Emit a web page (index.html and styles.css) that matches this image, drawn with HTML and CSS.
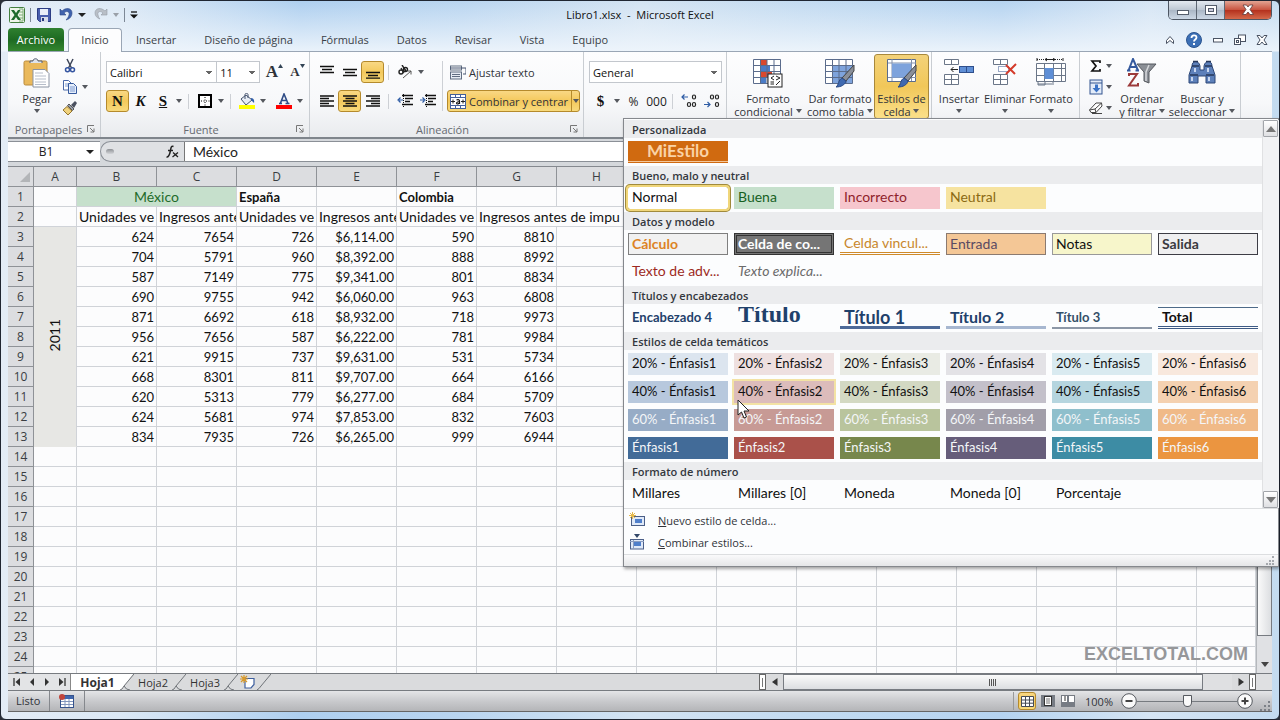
FILE: index.html
```html
<!DOCTYPE html>
<html lang="es">
<head>
<meta charset="utf-8">
<title>Libro1.xlsx - Microsoft Excel</title>
<link rel="stylesheet" href="styles.css">
</head>
<body>
<div class="window">
  <header class="titlebar">
    <div class="quick">
      <svg width="16" height="16" viewBox="0 0 16 16"><rect x=".5" y=".5" width="15" height="15" rx="1" fill="#eef5ea" stroke="#44803f"/><path d="M10 2h4v12h-4M10 5h4M10 8h4M10 11h4" fill="none" stroke="#7fae79"/><path d="M2 3h3l2 3 2-3h2.500L8.500 8l3.500 5H9L7 10l-2 3H2l3.500-5z" fill="#1f6b2c"/></svg>
      <span class="quick-sep"></span>
      <button class="icon-btn" aria-label="Guardar"><svg width="14" height="14" viewBox="0 0 14 14"><path d="M.5 .5h13v13h-11l-2-2z" fill="#4a5fae" stroke="#2c3c83"/><rect x="3" y="1" width="8" height="6" fill="#e9eef8"/><rect x="4" y="9" width="7" height="5" fill="#d7dcea"/><rect x="5" y="10" width="2" height="3" fill="#27367a"/></svg></button>
      <button class="icon-btn undo" aria-label="Deshacer"><svg width="14" height="14" viewBox="0 0 14 14"><path d="M1 1v6h6L5 5c3-3 6-1 5 2-.5 2-2 4-3 5 4-1 6-4 6-7C13 0 7-1 3 3z" fill="#3f62ad" stroke="#2b4687" stroke-width=".6"/></svg></button>
      <span class="caret dark"></span>
      <button class="icon-btn redo" aria-label="Rehacer"><svg width="14" height="14" viewBox="0 0 14 14"><path d="M13 1v6H7l2-2C6 2 3 4 4 7c.5 2 1 3 2 4C3 10 1 8 1 5c0-5 6-6 10-2z" fill="#b9bfc7" stroke="#959ca6" stroke-width=".6"/></svg></button>
      <span class="caret pale"></span>
      <span class="quick-sep"></span>
      <svg width="8" height="8" viewBox="0 0 8 8"><path d="M1 1h6" stroke="#111" stroke-width="1.300"/><path d="M0 3.500h8L4 7.500z" fill="#111"/></svg>
    </div>
    <div class="title">Libro1.xlsx&nbsp; -&nbsp; Microsoft Excel</div>
    <div class="win-controls">
      <button class="wc" aria-label="Minimizar"><svg width="14" height="12"><rect x="1.500" y="6.500" width="11" height="4" fill="#fff" stroke="#555d6b"/></svg></button>
      <button class="wc" aria-label="Restaurar"><svg width="14" height="12"><rect x="1.500" y="1.500" width="11" height="9" fill="#fff" stroke="#555d6b"/><rect x="4.500" y="4.500" width="5" height="3" fill="#ccd" stroke="#555d6b"/></svg></button>
      <button class="wc close" aria-label="Cerrar"><svg width="14" height="12" viewBox="0 0 14 12"><path d="M2 1h3.500L7 3l1.500-2H12L9 5.500l3.500 5H9L7 8l-2 2.500H1.500l3.500-5z" fill="#fff" stroke="#5d3a3a" stroke-width=".8"/></svg></button>
    </div>
  </header>

  <nav class="tabs">
    <button class="tab file">Archivo</button>
    <button class="tab active">Inicio</button>
    <button class="tab">Insertar</button>
    <button class="tab">Diseño de página</button>
    <button class="tab">Fórmulas</button>
    <button class="tab">Datos</button>
    <button class="tab">Revisar</button>
    <button class="tab">Vista</button>
    <button class="tab">Equipo</button>
    <div class="tab-tools">
      <svg width="12" height="12"><path d="M2.500 6.500l3.500-4 3.500 4v3l-3.500-3-3.500 3z" fill="#fff" stroke="#4a5363"/></svg>
      <svg width="16" height="16"><circle cx="8" cy="8" r="7.500" fill="#3b6fb5" stroke="#2c5590"/><path d="M5.500 6c0-3.500 5-3.500 5-.5 0 2-2.500 2-2.500 4" fill="none" stroke="#fff" stroke-width="1.800"/><rect x="7" y="11" width="2" height="2" fill="#fff"/></svg>
      <svg width="12" height="12"><rect x="1.500" y="4.500" width="9" height="3.500" fill="#fff" stroke="#4a5363"/></svg>
      <svg width="12" height="12"><rect x="4.500" y="1" width="7" height="6.500" fill="#fff" stroke="#4a5363"/><rect x=".5" y="4.500" width="6" height="6" fill="#fff" stroke="#4a5363"/><rect x="2.500" y="6.500" width="2" height="2" fill="none" stroke="#4a5363"/></svg>
      <svg width="12" height="12"><path d="M1 1.500h3l2 2.500 2-2.500h3L8 6l3 4.500H8L6 8l-2 2.500H1L4 6z" fill="#fff" stroke="#4a5363"/></svg>
    </div>
  </nav>

  <section class="ribbon">
    <div class="group clipboard">
      <div class="group-body">
        <button class="big">
          <svg width="28" height="30" viewBox="0 0 28 30"><rect x="1" y="3" width="23" height="24" rx="1.500" fill="#eab95c" stroke="#b98a3c"/><path d="M7 5V3h3c0-3 5-3 5 0h4v2" fill="#dfe4ec" stroke="#525d70"/><path d="M10 11.500h12l4 4V29H10z" fill="#fff" stroke="#8a93a3"/><path d="M12 15h8M12 18h11M12 21h11M12 24h11M12 26.500h11" stroke="#b6bdc9"/></svg>
          <span class="cap">Pegar<br><span class="caret"></span></span>
        </button>
        <div class="stack">
          <button class="small" aria-label="Cortar"><svg width="16" height="16" viewBox="0 0 16 16"><path d="M5 1l4.500 9M11 1L6.500 10" stroke="#3f475a" stroke-width="1.500"/><circle cx="5.500" cy="11.800" r="2" fill="none" stroke="#3454a0" stroke-width="1.500"/><circle cx="10.500" cy="11.800" r="2" fill="none" stroke="#3454a0" stroke-width="1.500"/></svg></button>
          <button class="small" aria-label="Copiar"><svg width="16" height="16" viewBox="0 0 16 16"><path d="M1.500 1.500h5l2.500 2.500v7h-7.500z" fill="#fff" stroke="#4a69a8"/><path d="M3 5h4M3 7h4" stroke="#7f9bd0"/><path d="M6.500 4.500h5l3 3v7h-8z" fill="#e6eefb" stroke="#35599d"/><path d="M8 8h5M8 10h5M8 12h5" stroke="#7f9bd0"/></svg><span class="caret"></span></button>
          <button class="small" aria-label="Copiar formato"><svg width="16" height="16" viewBox="0 0 16 16"><path d="M9 5l4-4 2 2-3 5z" fill="#4b5160"/><path d="M7 4l5 5-1.500 1.500-5-5z" fill="#9aa0ac" stroke="#555"/><path d="M5 6.500L10 11l-4 4-5-5z" fill="#f0d27d" stroke="#94742c"/></svg></button>
        </div>
      </div>
      <div class="group-label"><span>Portapapeles</span><svg class="launch" width="8" height="8"><path d="M.5 7V.5H7M3 3l4 4M7 3.500V7H3.500" fill="none" stroke="#777"/></svg></div>
    </div>

    <div class="group font">
      <div class="group-body rows">
        <div class="row">
          <select class="combo face" aria-label="Fuente"><option>Calibri</option></select>
          <select class="combo size" aria-label="Tamaño de fuente"><option>11</option></select>
          <button class="ib grow" aria-label="Aumentar tamaño"><span class="serif-lg">A</span><svg width="5" height="4"><path d="M0 4l2.500-4L5 4z" fill="#345"/></svg></button>
          <button class="ib shrink" aria-label="Disminuir tamaño"><span class="serif-sm">A</span><svg width="5" height="4"><path d="M0 0h5L2.500 4z" fill="#345"/></svg></button>
        </div>
        <div class="row">
          <button class="ib on serif">N</button><button class="ib serif italic">K</button><button class="ib serif under">S</button><span class="caret"></span><span class="sep"></span>
          <button class="ib" aria-label="Bordes"><svg width="14" height="14"><rect x="1" y="1" width="12" height="12" fill="#fff" stroke="#000" stroke-width="2"/><path d="M7 3v9M3 7h9" stroke="#000" stroke-dasharray="1 1.500"/></svg></button><span class="caret"></span><span class="sep"></span>
          <button class="ib" aria-label="Relleno"><svg width="16" height="16" viewBox="0 0 16 16"><path d="M2 6l5-4 6 5-6 5z" fill="#e8edf5" stroke="#44536e"/><path d="M6 6V1.500c0-1.500 3-1.500 3 0V5" fill="none" stroke="#44536e"/><path d="M12 5c3 0 3.500 3 3 5l-3-3z" fill="#2f5da8"/><rect y="12" width="16" height="4" fill="#ff0"/></svg></button><span class="caret wide-gap"></span>
          <button class="ib" aria-label="Color de fuente"><svg width="16" height="16" viewBox="0 0 16 16"><path d="M3 10.500h3M9.500 10.500h4M4.500 10L8 1l4 9.500M6 7.500h4.500" fill="none" stroke="#2f4c86" stroke-width="1.600"/><rect y="12" width="16" height="4" fill="#f00"/></svg></button><span class="caret"></span>
        </div>
      </div>
      <div class="group-label"><span>Fuente</span><svg class="launch" width="8" height="8"><path d="M.5 7V.5H7M3 3l4 4M7 3.500V7H3.500" fill="none" stroke="#777"/></svg></div>
    </div>

    <div class="group align">
      <div class="group-body">
        <div class="rows aligners">
          <div class="row">
            <button class="ib" aria-label="Arriba"><svg width="14" height="14"><path d="M0 1.500h14M2 4.500h10M0 7.500h14" stroke="#111" stroke-width="1.300"/></svg></button><button class="ib" aria-label="Medio"><svg width="14" height="14"><path d="M0 4.500h14M2 7.500h10M0 10.500h14" stroke="#111" stroke-width="1.300"/></svg></button><button class="ib on" aria-label="Abajo"><svg width="14" height="14"><path d="M0 7.500h14M2 10.500h10M0 13.200h14" stroke="#111" stroke-width="1.300"/></svg></button><span class="sep"></span>
            <button class="ib" aria-label="Orientación"><svg width="16" height="14" viewBox="0 0 16 14"><g fill="none" stroke="#222" stroke-width="1.400"><circle cx="4" cy="7" r="2"/><path d="M4 3l3 5"/><circle cx="8.500" cy="4.500" r="2"/><path d="M5 0l4 6"/></g><path d="M6 13l8-7M14 9.500V6h-3.500" fill="none" stroke="#555"/></svg></button><span class="caret"></span>
          </div>
          <div class="row">
            <button class="ib" aria-label="Izquierda"><svg width="14" height="12"><path d="M0 1h14M0 3.500h9M0 6h14M0 8.500h9M0 11h14" stroke="#111" stroke-width="1.300"/></svg></button><button class="ib on" aria-label="Centrar"><svg width="14" height="12"><path d="M0 1h14M2.500 3.500h9M0 6h14M2.500 8.500h9M0 11h14" stroke="#111" stroke-width="1.300"/></svg></button><button class="ib" aria-label="Derecha"><svg width="14" height="12"><path d="M0 1h14M5 3.500h9M0 6h14M5 8.500h9M0 11h14" stroke="#111" stroke-width="1.300"/></svg></button><span class="sep"></span>
            <button class="ib" aria-label="Disminuir sangría"><svg width="16" height="14"><path d="M5 1.500h11M8 4.500h8M8 7.500h5M5 10.500h11" stroke="#111" stroke-width="1.600"/><path d="M6.500 0v14" stroke="#111" stroke-dasharray="1 1"/><path d="M6 6H2M3.500 3.500L1 6l2.500 2.500" fill="none" stroke="#2e5ca5" stroke-width="1.200"/></svg></button><button class="ib" aria-label="Aumentar sangría"><svg width="16" height="14"><path d="M5 1.500h11M8 4.500h8M8 7.500h5M5 10.500h11" stroke="#111" stroke-width="1.600"/><path d="M6.500 0v14" stroke="#111" stroke-dasharray="1 1"/><path d="M0 6h4M2.500 3.500L5 6 2.500 8.500" fill="none" stroke="#2e5ca5" stroke-width="1.200"/></svg></button>
          </div>
        </div>
        <span class="sep tall"></span>
        <div class="rows merge-col">
          <div class="row"><button class="wide"><svg width="16" height="15"><rect x=".5" y="1" width="11" height="4" fill="#fff" stroke="#5f6c80"/><path d="M0 3h16v6h-3" fill="none" stroke="#44536e"/><rect x=".5" y="7" width="11" height="7" fill="#e6ebf3" stroke="#5f6c80"/><path d="M2 9.500h8M2 11.500h8" stroke="#5f6c80"/></svg>Ajustar texto</button></div>
          <div class="row"><button class="wide on"><svg width="16" height="15"><rect x=".5" y=".5" width="15" height="14" fill="#fff" stroke="#44609a"/><path d="M0 3.500h16M0 11.500h16M5.500 0v3M10.500 0v3M5.500 12v3M10.500 12v3" stroke="#44609a"/><path d="M1 7.500h4M3 5.500v4M11 7.500h4M13 5.500v4" stroke="#222"/><path d="M6.500 6c2-1 3 0 3 1v3M9.500 7.500c-3 0-4 2.500-1.500 2.500l1.500-1" fill="none" stroke="#111" stroke-width="1.200"/></svg><span>Combinar y centrar</span><i class="split"><span class="caret"></span></i></button></div>
        </div>
      </div>
      <div class="group-label"><span>Alineación</span><svg class="launch" width="8" height="8"><path d="M.5 7V.5H7M3 3l4 4M7 3.500V7H3.500" fill="none" stroke="#777"/></svg></div>
    </div>

    <div class="group number">
      <div class="group-body rows">
        <div class="row"><select class="combo format" aria-label="Formato de número"><option>General</option></select></div>
        <div class="row">
          <button class="ib serif">$</button><span class="caret"></span><button class="ib txt">%</button><button class="ib txt">000</button><span class="sep"></span>
          <button class="ib" aria-label="Aumentar decimales"><svg width="16" height="14"><g fill="none" stroke="#222" stroke-width="1.200"><rect x="11.500" y="1" width="3" height="4" rx="1.500"/><rect x="6.500" y="8.500" width="3" height="4" rx="1.500"/><rect x="11.500" y="8.500" width="3" height="4" rx="1.500"/></g><path d="M1 3h6M3.500 .5L1 3l2.500 2.500" fill="none" stroke="#2e5ca5" stroke-width="1.200"/></svg></button>
          <button class="ib" aria-label="Disminuir decimales"><svg width="16" height="14"><g fill="none" stroke="#222" stroke-width="1.200"><rect x="6.500" y="1" width="3" height="4" rx="1.500"/><rect x="11.500" y="1" width="3" height="4" rx="1.500"/><rect x="11.500" y="8.500" width="3" height="4" rx="1.500"/></g><path d="M0 10.500h6M3.500 8L6 10.500 3.500 13" fill="none" stroke="#2e5ca5" stroke-width="1.200"/></svg></button>
        </div>
      </div>
      <div class="group-label"></div>
    </div>

    <div class="group styles">
      <div class="group-body">
        <button class="big w76">
          <svg width="30" height="30" viewBox="0 0 30 30"><rect x=".5" y="1.500" width="27" height="24" fill="#fff"/><rect x="7" y="1" width="7" height="6" fill="#d9492e"/><rect x="7" y="7" width="10" height="6" fill="#4a7cc7"/><rect x="7" y="13" width="12" height="6" fill="#d9492e"/><rect x="7" y="19" width="6" height="6" fill="#4a7cc7"/><path d="M.5 1.500h27v24H.5zM.5 7.500h27M.5 13.500h27M.5 19.500h27M7.500 1v24M14 1v24M21 1v24" fill="none" stroke="#5b6c8c"/><rect x="15" y="16" width="14" height="13" fill="#fff" stroke="#222"/><path d="M21 18l-3 2 3 2M17.500 24h3.500M17.500 26h3.500M23 18l4 2-4 2M23 27l4-4" fill="none" stroke="#222"/></svg>
          <span class="cap">Formato<br>condicional <span class="caret"></span></span>
        </button>
        <button class="big w66">
          <svg width="30" height="30" viewBox="0 0 30 30"><rect x=".5" y="1.500" width="27" height="24" fill="#fff"/><rect x="7" y="7" width="21" height="18" fill="#7ea3dc"/><path d="M.5 1.500h27v24H.5zM.5 7.500h27M.5 13.500h27M.5 19.500h27M7.500 1v24M14 1v24M21 1v24" fill="none" stroke="#5b6c8c"/><path d="M29 7v6l-8 10-4-3z" fill="#8a8f99" stroke="#444"/><path d="M17 20l4 3c-1 4-5 6-10 6 3-2 2-7 6-9z" fill="#3f69b0" stroke="#2b4a85"/></svg>
          <span class="cap">Dar formato<br>como tabla <span class="caret"></span></span>
        </button>
        <button class="big on w54">
          <svg width="30" height="30" viewBox="0 0 30 30"><path d="M.5 1.500h28v22H.5z" fill="#fff" stroke="#5b6c8c"/><path d="M5 1v22M24.500 1v22M1 5h28M1 19.500h28" stroke="#8391ab"/><rect x="5" y="5.500" width="19" height="14" fill="#7ea3dc"/><path d="M29 7v6l-8 10-4-3z" fill="#8a8f99" stroke="#444"/><path d="M17 20l4 3c-1 4-5 6-10 6 3-2 2-7 6-9z" fill="#3f69b0" stroke="#2b4a85"/></svg>
          <span class="cap">Estilos de<br>celda <span class="caret"></span></span>
        </button>
      </div>
      <div class="group-label"></div>
    </div>

    <div class="group cells">
      <div class="group-body">
        <button class="big w46">
          <svg width="30" height="30" viewBox="0 0 30 30"><path d="M.5 1.500h14v5H.5zM7.500 1v5M.5 16.500h14v10H.5zM7.500 16v10M.5 21.500h14" fill="#fff" stroke="#6b7688"/><rect x="15.500" y="8.500" width="14" height="6" fill="#5f8fd6" stroke="#2f4f8c"/><path d="M22.500 8v6" stroke="#2f4f8c"/><path d="M14 11.500H7M9.500 9L7 11.500 9.500 14" fill="none" stroke="#222"/></svg>
          <span class="cap">Insertar<br><span class="caret"></span></span>
        </button>
        <button class="big w46">
          <svg width="30" height="30" viewBox="0 0 30 30"><path d="M3.500 1.500h14v5h-14zM10.500 1v5M3.500 16.500h14v10h-14zM10.500 16v10M3.500 21.500h14" fill="#fff" stroke="#6b7688"/><rect x="8.500" y="8.500" width="10" height="5" fill="#fff" stroke="#36558f" stroke-dasharray="1 1"/><path d="M16 7l9 9M26 6L16 16" stroke="#d43b2b" stroke-width="2"/></svg>
          <span class="cap">Eliminar<br><span class="caret"></span></span>
        </button>
        <button class="big w46">
          <svg width="30" height="30" viewBox="0 0 30 30"><path d="M.5 5.500h29v18H.5zM.5 10.500h29M.5 17.500h29M8.500 5v18M17.500 5v18M25.500 5v18" fill="#fff" stroke="#6b7688"/><rect x="8.500" y="10" width="9" height="11" fill="#5f8fd6"/><path d="M2 26h14M2 24v3h7v-3M17 24v3" fill="none" stroke="#6b7688"/><path d="M1 1.500h26" stroke="#222" stroke-dasharray="1 1"/><path d="M1 0v3M27 0v3M9 1.500h10M11 0L9 1.500 11 3M17 0l2 1.500L17 3" stroke="#222" fill="none"/></svg>
          <span class="cap">Formato<br><span class="caret"></span></span>
        </button>
      </div>
      <div class="group-label"></div>
    </div>

    <div class="group edit">
      <div class="group-body">
        <div class="stack">
          <button class="small" aria-label="Autosuma"><svg width="16" height="14"><path d="M12 4V2H4l4 5-4 5h8v-2" fill="none" stroke="#111" stroke-width="1.700"/></svg><span class="caret"></span></button>
          <button class="small" aria-label="Rellenar"><svg width="16" height="16"><rect x="2" y="1" width="12" height="14" fill="#e3ecf9" stroke="#33558f"/><path d="M2 4h12" stroke="#33558f"/><path d="M7 5.500h3V9h2.500l-4 4.500-4-4.500H7z" fill="#3b73c6"/></svg><span class="caret"></span></button>
          <button class="small" aria-label="Borrar"><svg width="16" height="14"><path d="M1.500 9L8 2l5.500 0L14 5l-6 6.500H3z" fill="#fff" stroke="#444"/><path d="M8 11.500L7 8l6.500-6M1.500 9L7 8M4 12.500h10" fill="none" stroke="#444"/></svg><span class="caret"></span></button>
        </div>
        <button class="big w60">
          <svg width="30" height="30" viewBox="0 0 30 30"><path d="M10 6h19l-7 8v11l-5-2v-9z" fill="#8b8f96" stroke="#55585e"/><path d="M22 7l-3 7v9" stroke="#d6d8db" fill="none" stroke-width="1.500"/><path d="M1.500 12.500L6 1l5 11.500M3 9h6M0 12.500h3.500M8.500 12.500H12" fill="none" stroke="#35599d" stroke-width="2"/><path d="M2 18v-2h8L2 27.500h9V25" fill="none" stroke="#9c3a3a" stroke-width="2"/></svg>
          <span class="cap">Ordenar<br>y filtrar <span class="caret"></span></span>
        </button>
        <button class="big w66">
          <svg width="28" height="30" viewBox="0 0 28 30"><path d="M4 8c0-6 7-6 8 0v4h4V8c1-6 8-6 8 0l3 9v8h-9v-7h-8v7H1v-8z" fill="#5d80ba" stroke="#2d4777"/><path d="M5 3.500h5M18 3.500h5M4 8h7M17 8h7M2 17h8M18 17h8" stroke="#26375a" stroke-width="1.500"/><path d="M4 19v4M21 19v4M7 10v4M20 10v4" stroke="#c8d7f0" stroke-width="2"/></svg>
          <span class="cap">Buscar y<br>seleccionar <span class="caret"></span></span>
        </button>
      </div>
      <div class="group-label"></div>
    </div>
  </section>

  <section class="formula">
    <label class="namebox"><input type="text" value="B1" aria-label="Cuadro de nombres"><span class="caret dark"></span></label>
    <div class="fx"><span class="knob"></span><svg width="14" height="14" viewBox="0 0 14 14"><path d="M8.500 1.500C6 .5 6 3 5.500 5.500S4 12.500 1.500 12M3 5.500h5" fill="none" stroke="#222" stroke-width="1.500"/><path d="M8 7.500l5 4.500M13 7.500l-5.500 4.500" stroke="#222" stroke-width="1.300"/></svg></div>
    <input class="content" type="text" value="México" aria-label="Barra de fórmulas">
  </section>

  <main class="sheet">
    <div class="grid-clip">
      <table class="grid">
        <colgroup><col class="c-row"><col class="c-a"><col span="14" class="c-n"><col></colgroup>
        <thead><tr><th class="corner"><svg width="12" height="12"><path d="M11 1v10H1z" fill="#b3b5b8"/></svg></th><th>A</th><th>B</th><th>C</th><th>D</th><th>E</th><th>F</th><th>G</th><th>H</th><th></th><th></th><th></th><th></th><th></th><th></th><th></th><th></th></tr></thead>
        <tbody>
          <tr><th>1</th><td></td><td colspan="2" class="good">México</td><td class="b">España</td><td></td><td class="b">Colombia</td><td></td><td colspan="9" class="rest"></td></tr>
          <tr class="words"><th>2</th><td></td><td>Unidades ve</td><td>Ingresos ante</td><td>Unidades ve</td><td>Ingresos ante</td><td>Unidades ve</td><td colspan="2">Ingresos antes de impu</td><td colspan="8" class="rest"></td></tr>
          <tr class="n"><th>3</th><td rowspan="11" class="year"><span>2011</span></td><td>624</td><td>7654</td><td>726</td><td>$6,114.00</td><td>590</td><td>8810</td><td colspan="9" class="rest"></td></tr>
          <tr class="n"><th>4</th><td>704</td><td>5791</td><td>960</td><td>$8,392.00</td><td>888</td><td>8992</td><td colspan="9" class="rest"></td></tr>
          <tr class="n"><th>5</th><td>587</td><td>7149</td><td>775</td><td>$9,341.00</td><td>801</td><td>8834</td><td colspan="9" class="rest"></td></tr>
          <tr class="n"><th>6</th><td>690</td><td>9755</td><td>942</td><td>$6,060.00</td><td>963</td><td>6808</td><td colspan="9" class="rest"></td></tr>
          <tr class="n"><th>7</th><td>871</td><td>6692</td><td>618</td><td>$8,932.00</td><td>718</td><td>9973</td><td colspan="9" class="rest"></td></tr>
          <tr class="n"><th>8</th><td>956</td><td>7656</td><td>587</td><td>$6,222.00</td><td>781</td><td>9984</td><td colspan="9" class="rest"></td></tr>
          <tr class="n"><th>9</th><td>621</td><td>9915</td><td>737</td><td>$9,631.00</td><td>531</td><td>5734</td><td colspan="9" class="rest"></td></tr>
          <tr class="n"><th>10</th><td>668</td><td>8301</td><td>811</td><td>$9,707.00</td><td>664</td><td>6166</td><td colspan="9" class="rest"></td></tr>
          <tr class="n"><th>11</th><td>620</td><td>5313</td><td>779</td><td>$6,277.00</td><td>684</td><td>5709</td><td colspan="9" class="rest"></td></tr>
          <tr class="n"><th>12</th><td>624</td><td>5681</td><td>974</td><td>$7,853.00</td><td>832</td><td>7603</td><td colspan="9" class="rest"></td></tr>
          <tr class="n"><th>13</th><td>834</td><td>7935</td><td>726</td><td>$6,265.00</td><td>999</td><td>6944</td><td colspan="9" class="rest"></td></tr>
          <tr><th>14</th><td></td><td colspan="15" class="rest"></td></tr>
          <tr><th>15</th><td></td><td colspan="15" class="rest"></td></tr>
          <tr><th>16</th><td></td><td colspan="15" class="rest"></td></tr>
          <tr><th>17</th><td></td><td colspan="15" class="rest"></td></tr>
          <tr><th>18</th><td></td><td colspan="15" class="rest"></td></tr>
          <tr><th>19</th><td></td><td colspan="15" class="rest"></td></tr>
          <tr><th>20</th><td></td><td colspan="15" class="rest"></td></tr>
          <tr><th>21</th><td></td><td colspan="15" class="rest"></td></tr>
          <tr><th>22</th><td></td><td colspan="15" class="rest"></td></tr>
          <tr><th>23</th><td></td><td colspan="15" class="rest"></td></tr>
          <tr><th>24</th><td></td><td colspan="15" class="rest"></td></tr>
          <tr><th>25</th><td></td><td colspan="15" class="rest"></td></tr>
        </tbody>
      </table>
      <div class="watermark">EXCELTOTAL.COM</div>
    </div>
    <div class="vscroll"><div class="vthumb"></div><button aria-label="Bajar"><span class="caret big-caret"></span></button></div>
  </main>

  <div class="sheetbar">
    <div class="nav">
      <button aria-label="Primera"><svg width="8" height="8"><path d="M1 0v8" stroke="#333" stroke-width="1.300"/><path d="M7 0v8L2.500 4z" fill="#333"/></svg></button>
      <button aria-label="Anterior"><svg width="8" height="8"><path d="M6 0v8L2 4z" fill="#333"/></svg></button>
      <button aria-label="Siguiente"><svg width="8" height="8"><path d="M2 0v8l4-4z" fill="#333"/></svg></button>
      <button aria-label="Última"><svg width="8" height="8"><path d="M7 0v8" stroke="#333" stroke-width="1.300"/><path d="M1 0v8l4.500-4z" fill="#333"/></svg></button>
    </div>
    <button class="stab current">Hoja1</button>
    <svg class="slash" width="14" height="16"><path d="M0 0h13L4 12q-2 4-4 4z" fill="#fff"/><path d="M14 0L4 12q2 4 6 4M4 12q-2 4-4 4" fill="none" stroke="#6f7378"/></svg>
    <button class="stab">Hoja2</button>
    <svg class="slash" width="14" height="16"><path d="M14 0L4 12q2 4 6 4M4 12q-2 4-4 4" fill="none" stroke="#6f7378"/></svg>
    <button class="stab">Hoja3</button>
    <svg class="slash" width="14" height="16"><path d="M14 0L4 12q2 4 6 4M4 12q-2 4-4 4" fill="none" stroke="#6f7378"/></svg>
    <button class="stab new" aria-label="Insertar hoja"><svg width="15" height="14"><path d="M5 3.500h9v6L11 13H5z" fill="#fff" stroke="#3e5f9e" stroke-width="1.200"/><path d="M4 0v8M0 4h8M1 1l6 6M7 1L1 7" stroke="#d99a2b" stroke-width="1.200"/></svg></button>
    <svg class="slash" width="14" height="16"><path d="M14 0L4 12q-2 3-4 4" fill="none" stroke="#6f7378"/></svg>
    <div class="fill"></div>
    <span class="splitter"></span>
    <button class="hs" aria-label="Desplazar a la izquierda"><svg width="6" height="8"><path d="M5.500 0v8L0 4z" fill="#333"/></svg></button>
    <div class="htrack"><div class="hthumb"><svg width="8" height="7"><path d="M.5 0v7M2.500 0v7M4.500 0v7M6.500 0v7" stroke="#555"/></svg></div></div>
    <button class="hs" aria-label="Desplazar a la derecha"><svg width="6" height="8"><path d="M.5 0v8L6 4z" fill="#333"/></svg></button>
    <span class="splitter"></span>
    <span class="hcorner"></span>
  </div>

  <footer class="status">
    <span class="ready">Listo</span>
    <span class="macro"><svg width="16" height="14"><rect x="1.500" y="1.500" width="13" height="12" fill="#fff" stroke="#35528c"/><rect x="2" y="2" width="12" height="3" fill="#3f66ad"/><path d="M2 7.500h12M2 10.500h12M6 5v8M10 5v8" stroke="#8296bd"/><circle cx="3" cy="3" r="3" fill="#c0443a"/></svg></span>
    <div class="fill"></div>
    <div class="views">
      <button class="view on" aria-label="Normal"><svg width="13" height="11"><path d="M.5 .5h12v10H.5zM.5 4h12M.5 7.200h12M4.500 0v11M8.500 0v11" fill="#fff" stroke="#454b55"/></svg></button>
      <button class="view" aria-label="Diseño de página"><svg width="14" height="12"><rect width="14" height="12" fill="#777c84"/><rect x="3.500" y="1.500" width="7" height="9" fill="#fff" stroke="#333"/><path d="M5 4h4M5 6h4M5 8h4" stroke="#777"/></svg></button>
      <button class="view" aria-label="Salto de página"><svg width="14" height="12"><rect width="14" height="12" fill="#777c84"/><path d="M1 1h5v6H1zM8 1h5v6H8z" fill="#fff"/><path d="M4 1v5" stroke="#333"/></svg></button>
    </div>
    <span class="pct">100%</span>
    <button class="round" aria-label="Alejar"><svg width="16" height="16"><circle cx="8" cy="8" r="7.300" fill="#fafafa" stroke="#55595f"/><path d="M4.500 8h7" stroke="#444" stroke-width="2"/></svg></button>
    <input class="zoom" type="range" min="0" max="100" value="50" aria-label="Zoom">
    <button class="round" aria-label="Acercar"><svg width="16" height="16"><circle cx="8" cy="8" r="7.300" fill="#fafafa" stroke="#55595f"/><path d="M4.500 8h7M8 4.500v7" stroke="#444" stroke-width="2"/></svg></button>
    <svg class="grip" width="12" height="12"><path d="M8 2h2v2H8zM4 6h2v2H4zM8 6h2v2H8zM0 10h2v2H0zM4 10h2v2H4zM8 10h2v2H8z" fill="#7c8087"/></svg>
  </footer>
</div>

<div class="menu">
  <div class="menu-main">
    <div class="gallery">
      <h3>Personalizada</h3>
      <div class="tiles"><button class="tile mi">MiEstilo</button></div>
      <h3>Bueno, malo y neutral</h3>
      <div class="tiles"><button class="tile normal">Normal</button><button class="tile buena">Buena</button><button class="tile malo">Incorrecto</button><button class="tile neutral">Neutral</button></div>
      <h3>Datos y modelo</h3>
      <div class="tiles"><button class="tile calc">Cálculo</button><button class="tile check">Celda de co...</button><button class="tile linked">Celda vincul...</button><button class="tile entry">Entrada</button><button class="tile notes">Notas</button><button class="tile output">Salida</button><button class="tile warn">Texto de adv...</button><button class="tile expl">Texto explica...</button></div>
      <h3>Títulos y encabezados</h3>
      <div class="tiles"><button class="tile h4">Encabezado 4</button><button class="tile ht">Título</button><button class="tile h1">Título 1</button><button class="tile h2">Título 2</button><button class="tile h3">Título 3</button><button class="tile total">Total</button></div>
      <h3>Estilos de celda temáticos</h3>
      <div class="tiles themed">
        <button class="tile a1">20% - Énfasis1</button><button class="tile a2">20% - Énfasis2</button><button class="tile a3">20% - Énfasis3</button><button class="tile a4">20% - Énfasis4</button><button class="tile a5">20% - Énfasis5</button><button class="tile a6">20% - Énfasis6</button>
        <button class="tile b1">40% - Énfasis1</button><button class="tile b2 hover">40% - Énfasis2</button><button class="tile b3">40% - Énfasis3</button><button class="tile b4">40% - Énfasis4</button><button class="tile b5">40% - Énfasis5</button><button class="tile b6">40% - Énfasis6</button>
        <button class="tile lt c1">60% - Énfasis1</button><button class="tile lt c2">60% - Énfasis2</button><button class="tile lt c3">60% - Énfasis3</button><button class="tile lt c4">60% - Énfasis4</button><button class="tile lt c5">60% - Énfasis5</button><button class="tile lt c6">60% - Énfasis6</button>
        <button class="tile lt d1">Énfasis1</button><button class="tile lt d2">Énfasis2</button><button class="tile lt d3">Énfasis3</button><button class="tile lt d4">Énfasis4</button><button class="tile lt d5">Énfasis5</button><button class="tile lt d6">Énfasis6</button>
      </div>
      <h3>Formato de número</h3>
      <div class="tiles"><button class="tile">Millares</button><button class="tile">Millares [0]</button><button class="tile">Moneda</button><button class="tile">Moneda [0]</button><button class="tile">Porcentaje</button></div>
    </div>
    <div class="mscroll"><button aria-label="Subir"><svg width="10" height="6"><path d="M5 0l5 6H0z" fill="#777"/></svg></button><button aria-label="Bajar"><svg width="10" height="6"><path d="M5 6l5-6H0z" fill="#777"/></svg></button></div>
  </div>
  <div class="commands">
    <button class="cmd"><svg width="16" height="16"><rect x="2.500" y="4.500" width="13" height="9" fill="#dfe9f8" stroke="#4b5f88"/><rect x="6" y="7" width="7" height="4" fill="#4f7fcb"/><path d="M3.500 0v7M0 3.500h7M1 1l5 5M6 1L1 6" stroke="#e6b94a"/></svg><span><u>N</u>uevo estilo de celda...</span></button>
    <button class="cmd"><svg width="16" height="16"><path d="M5 0h6L8 4z" fill="#334869"/><rect x="1.500" y="5.500" width="13" height="9.500" fill="#dfe9f8" stroke="#4b5f88"/><rect x="5" y="8" width="7" height="4" fill="#4f7fcb"/><path d="M4.500 6v9M1 7.500h14" stroke="#8b9dc0"/></svg><span><u>C</u>ombinar estilos...</span></button>
  </div>
  <div class="menu-foot"><svg width="10" height="10"><path d="M6 1h2v2H6zM3 5h2v2H3zM6 5h2v2H6zM0 8h2v2H0zM3 8h2v2H3zM6 8h2v2H6z" fill="#a5a8ad"/></svg></div>
</div>

<svg class="cursor" width="13" height="20" viewBox="0 0 13 20"><path d="M1 1v15l3.500-3 2.500 6 2.500-1-2.500-6h5z" fill="#fff" stroke="#222"/></svg>
</body>
</html>
```
FILE: styles.css
```css
* { box-sizing: border-box; }
body {
  margin: 0;
  position: relative;
  overflow: hidden;
  font-family: "Open Sans", "Noto Sans", sans-serif;
  font-size: 11px;
  color: #303339;
  background: #2a2f38;
}
button, input, select {
  font: inherit;
  color: inherit;
  margin: 0;
  padding: 0;
  border: 0;
  background: none;
  border-radius: 0;
}
button { display: flex; align-items: center; justify-content: center; white-space: nowrap; }
svg { display: block; flex: none; }

.window {
  height: 100vh;
  display: flex;
  flex-direction: column;
  padding: 0 7px 7px;
  border: 1px solid #1f2632;
  border-radius: 6px;
  background:
    linear-gradient(180deg, rgba(255,255,255,0) 0, rgba(240,246,252,.9) 50px, rgba(255,255,255,0) 51px),
    linear-gradient(90deg, #e3ecf6 0, #dbe8f5 120px, #aecfef 300px, #b9d5f0 460px, #d3e3f2 640px, #c3dbf1 800px, #b5d3f0 1000px, #d6e5f4 1150px, #c3dbf0 100%);
}
.caret {
  display: inline-block;
  flex: none;
  width: 0;
  height: 0;
  border: 3px solid transparent;
  border-top: 4px solid #55585e;
  border-bottom: 0;
  margin: 0 2px;
  vertical-align: 2px;
}
.caret.dark { border-top-color: #222; border-left-width: 4px; border-right-width: 4px; }
.caret.pale { border-top-color: #9aa0a8; }

/* title bar */
.titlebar { display: grid; grid-template-columns: 1fr auto 1fr; height: 27px; flex: none; }
.quick { display: flex; align-items: center; gap: 5px; padding-left: 1px; }
.quick-sep { width: 1px; height: 14px; background: #7d8896; }
.quick .icon-btn { margin-left: 1px; }
.quick .undo, .quick .redo { margin-left: 3px; }
.quick .caret { margin: 0; }
.title { align-self: center; font-size: 11px; color: #111; }
.win-controls {
  justify-self: end;
  display: flex;
  height: 19px;
  border: 1px solid #4d5663;
  border-top: 0;
  border-radius: 0 0 5px 5px;
  overflow: hidden;
}
.wc { width: 28px; background: linear-gradient(#e3e9f0, #bcc6d2 50%, #aab6c5 50%, #cdd8e5); border-right: 1px solid #5d6673; }
.wc.close { width: 46px; border-right: 0; background: linear-gradient(#e3a493, #c8523e 50%, #b32f1c 50%, #d4694a); }

/* ribbon tabs */
.tabs { display: flex; height: 23px; flex: none; align-items: stretch; color: #3a3f47; }
.tab { padding: 0 14px; }
.tab.file {
  width: 56px;
  padding: 0;
  margin-right: 4px;
  color: #fff;
  background: linear-gradient(#2f8030, #1d6a22 50%, #34862f);
  border-radius: 4px 4px 0 0;
}
.tab.active { position: relative; z-index: 1; width: 54px; padding: 0 0 2px; background: #fdfdfe; border: 1px solid #9aa6b5; border-bottom: 0; border-radius: 4px 4px 0 0; margin-bottom: -1px; }
.tab-tools { margin-left: auto; display: flex; align-items: center; gap: 10px; padding-right: 4px; }

/* ribbon */
.ribbon {
  display: flex;
  flex: none;
  height: 88px;
  border-top: 1px solid #9aa6b5;
  border-bottom: 2px solid #7f858c;
  background: linear-gradient(#fdfdfe, #f7f8fa 60%, #e9ebee);
}
.group { display: flex; flex-direction: column; flex: none; border-right: 1px solid #c9cdd2; padding: 2px 0 0; }
.group-body { display: flex; height: 67px; }
.group-label { display: flex; align-items: center; height: 16px; color: #666a70; padding: 0 5px; }
.group-label span { flex: 1; text-align: center; }
.clipboard { width: 93px; }
.clipboard .group-label { padding-left: 2px; }
.font { width: 209px; }
.align { width: 274px; }
.number { width: 143px; }
.styles { width: 205px; }
.cells { width: 148px; }
.edit { width: 161px; }
.styles .group-body { padding-left: 3px; }
.cells .group-body { padding-left: 4px; }
.big { flex-direction: column; justify-content: flex-start; gap: 4px; padding: 3px 0 0; height: 65px; width: 46px; border: 1px solid transparent; border-radius: 3px; }
.big .cap { line-height: 13px; text-align: center; }
.big .cap .caret { margin: 0; vertical-align: 3px; }
.clipboard .big { margin-left: 6px; }
.w76 { width: 76px; }
.w66 { width: 68px; }
.w60 { width: 60px; }
.w54 { width: 55px; }
.w46 { width: 46px; }
.on { border: 1px solid #b58a2c; border-radius: 3px; background: linear-gradient(#f9d884, #f4c95c 50%, #f8da7c); }
.big.on { border-color: #a8883c; background: linear-gradient(#f3d27a, #f1c759 50%, #fbe08a); }
.stack { display: flex; flex-direction: column; padding: 1px 0 0 8px; }
.clipboard .stack { padding-left: 2px; }
.small { height: 21px; justify-content: flex-start; gap: 2px; }
.edit .small .caret { margin: 0; }
.edit .big { margin-right: -4px; }
.rows { display: flex; flex-direction: column; gap: 7px; padding: 7px 0 0 5px; }
.row { display: flex; align-items: center; height: 22px; }
.combo {
  height: 22px;
  appearance: none;
  border: 1px solid #c3c7cd;
  background-color: #fff;
  padding: 0 3px;
  color: #111;
  background-image: linear-gradient(#666, #666), linear-gradient(#666, #666), linear-gradient(#666, #666);
  background-size: 6px 1px, 4px 1px, 2px 1px;
  background-position: right 4px top 9px, right 5px top 10px, right 6px top 11px;
  background-repeat: no-repeat;
}
.face { width: 112px; }
.size { width: 43px; border-left: 0; }
.format { width: 133px; }
.ib { width: 23px; height: 22px; flex: none; }
.row .caret { margin: 0 2px; }
.row .caret.wide-gap { margin-right: 6px; }
.sep { width: 1px; height: 15px; background: #cdd0d5; margin: 0 4px; flex: none; }
.sep.tall { height: 50px; margin: 7px 4px 0; align-self: flex-start; }
.serif { font-family: "Liberation Serif", serif; font-weight: bold; font-size: 15px; color: #111; }
.italic { font-style: italic; }
.under { text-decoration: underline; width: 22px; }
.serif-lg { font: bold 17px "Liberation Serif", serif; }
.serif-sm { font: bold 13px "Liberation Serif", serif; }
.grow, .shrink { align-items: center; }
.grow svg, .shrink svg { align-self: flex-start; margin-top: 3px; }
.grow { margin-left: 3px; }
.txt { color: #222; font-size: 12px; }
.aligners { width: 128px; flex: none; }
.merge-col { padding-left: 0; }
.wide { height: 22px; gap: 3px; padding: 0 3px; }
.wide.on { padding: 0 0 0 2px; width: 133px; justify-content: flex-start; }
.split { display: flex; align-items: center; justify-content: center; height: 20px; width: 11px; margin-left: auto; border-left: 1px solid #b58a2c; }
.row .split .caret { margin: 0; }

/* formula bar */
.formula { display: flex; flex: none; height: 28px; padding: 2px 0 4px; background: #d5d8dc; border-bottom: 1px solid #85898f; }
.formula > * { border-top: 1px solid #8b9097; border-bottom: 1px solid #8b9097; }
.namebox { display: flex; align-items: center; width: 92px; background: #fff; padding-right: 4px; }
.namebox input { flex: 1; width: 0; text-align: center; font-size: 12px; color: #222; }
.fx { display: flex; align-items: center; justify-content: space-between; width: 85px; padding: 0 5px; background: #dfe1e4; border-left: 1px solid #8b9097; border-right: 1px solid #777; border-radius: 11px 0 0 11px; }
.knob { width: 8px; height: 5px; border-radius: 4px; background: linear-gradient(#8e9196, #d3d5d8); }
.content { flex: 1; min-width: 0; background: #fff; padding: 0 8px; font-family: "Lato", sans-serif; font-size: 14px; color: #222; }

/* sheet */
.sheet { display: flex; flex: 1; min-height: 0; background: #fcfcfd; }
.grid-clip { flex: 1; min-width: 0; overflow: hidden; position: relative; }
.grid { width: 100%; min-width: 1248px; table-layout: fixed; border-collapse: separate; border-spacing: 0; font-family: "Lato", "Noto Sans", sans-serif; font-size: 13px; line-height: 18px; color: #111; }
.c-row { width: 26px; }
.c-a { width: 43px; }
.c-n { width: 80px; }
.grid th, .grid td { height: 20px; padding: 1px 2px 0; overflow: hidden; white-space: nowrap; border-right: 1px solid #d0d3d8; border-bottom: 1px solid #d0d3d8; text-align: left; }
.grid th { font-family: "Open Sans", sans-serif; font-size: 12px; font-weight: normal; text-align: center; padding: 1px 0 0; color: #3a3d42; background: #dcdde0; border-color: #8f9297; }
.grid .corner svg { margin-left: 11px; }
.grid .good { background: #c6e0cc; color: #1f6b2a; text-align: center; font-size: 14px; }
.grid .b { font-weight: bold; }
.grid .words td { font-size: 14px; }
.grid .n td { text-align: right; }
.grid .n .year { background: #e7e7e4; text-align: center; vertical-align: middle; border-bottom-color: #e7e7e4; }
.year span { display: inline-block; writing-mode: vertical-rl; transform: rotate(180deg); font-size: 14px; }
.grid .rest { padding: 0; background: repeating-linear-gradient(90deg, transparent 0, transparent 79px, #d0d3d8 79px, #d0d3d8 80px); }
.watermark { position: absolute; right: 8px; bottom: 8px; font-family: "Liberation Sans", sans-serif; font-weight: bold; font-size: 18px; color: #96979a; }
.vscroll { width: 16px; flex: none; display: flex; flex-direction: column; justify-content: space-between; background: #e0e1e4; border-left: 1px solid #b5b8bc; }
.vthumb { height: calc(100% - 37px); background: linear-gradient(90deg, #fafafa, #dcdee1); border: 1px solid #777b81; }
.vscroll button { height: 17px; width: 100%; }
.big-caret { border-width: 5px 4px 0; border-top-color: #444; margin: 0; }

/* sheet tabs */
.sheetbar { display: flex; flex: none; height: 17px; background: #dadbdd; border-top: 1px solid #777b80; align-items: stretch; color: #333; font-size: 12px; }
.nav { display: flex; width: 63px; padding: 0 1px; background: #e3e4e6; border-right: 1px solid #888; }
.nav button { flex: 1; }
.stab { width: 38px; }
.stab:not(.current):not(.new) { font-size: 11px; }
.stab.current { width: 49px; background: #fff; font-weight: bold; padding-left: 4px; }
.stab.new { width: 19px; }
.fill { flex: 1; }
.splitter { width: 7px; border: 1px solid #666; background: #fff linear-gradient(#777, #777) center / 1px 9px no-repeat; }
.hs { width: 17px; }
.htrack { width: 449px; background: #dfe0e2; }
.hthumb { width: 420px; height: 16px; display: flex; align-items: center; justify-content: center; border: 1px solid #777b81; background: linear-gradient(#fafafa, #dcdee1); }
.hcorner { width: 16px; background: #dfe0e2; }

/* status bar */
.status { display: flex; flex: none; align-items: center; height: 22px; border-top: 1px solid #777b80; border-bottom: 1px solid #666; background: linear-gradient(#e4e5e7, #c9cacd 50%, #b4b5b8); }
.ready { padding: 0 10px 0 8px; border-right: 1px solid #85888d; line-height: 20px; width: 42px; }
.macro { padding: 3px 9px; border-right: 1px solid #85888d; height: 20px; }
.views { display: flex; align-items: center; gap: 3px; border-left: 1px solid #999; padding-left: 4px; }
.view { width: 17px; height: 18px; }
.view.on { width: 18px; }
.pct { padding: 0 8px 0 9px; font-size: 11px; }
.round { width: 16px; }
.zoom { appearance: none; width: 100px; height: 16px; background: linear-gradient(#777b80, #777b80) center / 100% 1px no-repeat; }
.zoom::-webkit-slider-thumb { appearance: none; width: 9px; height: 12px; background: #fafafa; border: 1px solid #55595f; border-radius: 1px 1px 5px 5px; }
.grip { margin-left: 7px; align-self: flex-end; }

/* cell styles gallery */
.menu { position: absolute; left: 623px; right: 1px; top: 118px; border: 1px solid #85888d; background: #fcfdfe; padding-top: 1px; box-shadow: 1px 2px 3px rgba(0,0,0,.35); }
.menu-main { display: flex; border-bottom: 1px solid #dcdee0; }
.gallery { flex: 1; }
.gallery h3 { margin: 0; height: 18px; padding: 0 8px; line-height: 20px; font-size: 11px; font-weight: 600; color: #33373d; background: #ebecee; }
.tiles { display: grid; grid-template-columns: repeat(6, 100px); grid-auto-rows: 22px; gap: 6px; padding: 3px 4px; }
.tile { justify-content: flex-start; padding: 0 4px 2px; overflow: hidden; font-family: "Lato", sans-serif; font-size: 14px; line-height: 18px; color: #111; }
.themed .tile { font-size: 13px; }
.mi { justify-content: center; font-size: 17px; font-weight: bold; color: #fad3a6; background: #d06a10; border-bottom: 1px solid #d06a10; box-shadow: inset 0 -1px #f3c79b; }
.normal { background: #fff; outline: 2px solid #f0d67a; box-shadow: 0 0 0 3px #a08a3c; border-radius: 2px; }
.buena { background: #c6e0cc; color: #16601f; }
.malo { background: #f6c6cd; color: #8f1f2b; }
.neutral { background: #f6e3a0; color: #8b6a14; }
.calc { background: #f1f1f1; border: 1px solid #7f7f7f; padding: 0 3px; color: #dd8325; font-weight: bold; }
.check { background: #757575; border: 3px double #333; padding: 0 1px; color: #fff; font-weight: bold; }
.linked { color: #c8872c; border-bottom: 3px double #cf8a2a; padding-bottom: 0; }
.entry { background: #f4c796; border: 1px solid #8b7a70; padding: 0 3px; color: #5a4a63; }
.notes { background: #f7f6cb; border: 1px solid #999; padding: 0 3px; }
.output { background: #efeff0; border: 1px solid #3d3d45; padding: 0 3px; color: #3a3a3f; font-weight: bold; }
.warn { color: #9c2a22; }
.expl { color: #6b6b6b; font-style: italic; }
.h4, .h3, .h2, .h1, .ht { color: #1f416b; font-weight: bold; }
.h4, .h3 { font-size: 13px; }
.ht { font-family: "Liberation Serif", serif; font-size: 24px; line-height: 14px; align-items: flex-start; }
.h1 { font-size: 18px; border-bottom: 3px solid #4d6a99; padding-bottom: 0; }
.h2 { font-size: 16px; border-bottom: 3px solid #a7b7d0; padding-bottom: 0; }
.h3 { border-bottom: 2px solid #8c97a6; color: #345068; padding-bottom: 0; }
.total { font-weight: bold; border-top: 1px solid #4d6a88; border-bottom: 3px double #3d5a85; padding-bottom: 0; }
.a1 { background: #dce5ef; } .a2 { background: #eee0e0; } .a3 { background: #e9ebe4; } .a4 { background: #e3e2e6; } .a5 { background: #d9eaf0; } .a6 { background: #f8e8dd; }
.b1 { background: #b7c8dd; } .b2 { background: #dcbcbb; } .b3 { background: #d3d9c3; } .b4 { background: #c3c0ca; } .b5 { background: #b5d5df; } .b6 { background: #f4d1b1; }
.hover { outline: 2px solid #f3e2a4; }
.lt { color: #f4f6f8; }
.c1 { background: #97acc6; } .c2 { background: #c79a95; } .c3 { background: #b9c49d; } .c4 { background: #a19ea9; } .c5 { background: #8fbfcc; } .c6 { background: #f0ba88; }
.d1 { background: #426b98; } .d2 { background: #aa514a; } .d3 { background: #77874c; } .d4 { background: #665d7a; } .d5 { background: #3d8ca4; } .d6 { background: #eb9540; }
.mscroll { width: 17px; flex: none; display: flex; flex-direction: column; justify-content: space-between; background: #f1f2f4; border-left: 1px solid #e0e1e3; }
.mscroll button { height: 17px; width: 15px; border: 1px solid #a2a5aa; border-radius: 1px; background: linear-gradient(#fff, #dfe0e3); }
.commands { padding: 0 0 1px; border-bottom: 1px solid #dcdee0; }
.cmd { width: 100%; height: 22px; justify-content: flex-start; gap: 13px; padding-left: 5px; }
.menu-foot { display: flex; justify-content: flex-end; height: 11px; padding-right: 2px; background: linear-gradient(#fafafb, #e5e6e8); }
.cursor { position: absolute; left: 737px; top: 399px; }
```
